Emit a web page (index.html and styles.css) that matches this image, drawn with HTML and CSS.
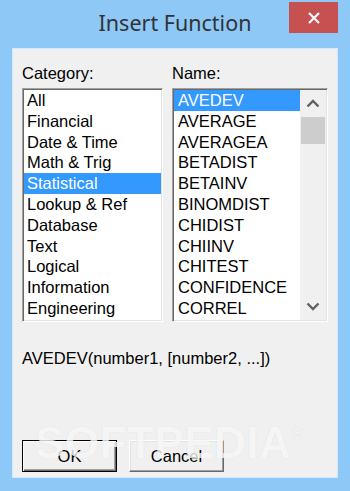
FILE: index.html
```html
<!DOCTYPE html>
<html lang="en">
<head>
  <meta charset="UTF-8" />
  <meta name="viewport" content="width=device-width, initial-scale=1" />
  <title>Insert Function</title>
  <link rel="stylesheet" href="styles.css">
</head>
<body>
  <div class="window">
    <div class="titlebar">
      <span></span>
      <h1 class="title">Insert Function</h1>
      <button class="close" aria-label="Close">
        <svg width="14" height="14" viewBox="0 0 14 14">
          <path d="M2 2 L12 12 M12 2 L2 12" stroke="#fff" stroke-width="2.2" />
        </svg>
      </button>
    </div>

    <div class="client">
      <div class="lists">
        <div class="col col-cat">
          <label class="caption">Category:</label>
          <ul class="listbox">
            <li>All</li>
            <li>Financial</li>
            <li>Date &amp; Time</li>
            <li>Math &amp; Trig</li>
            <li class="selected">Statistical</li>
            <li>Lookup &amp; Ref</li>
            <li>Database</li>
            <li>Text</li>
            <li>Logical</li>
            <li>Information</li>
            <li>Engineering</li>
          </ul>
        </div>

        <div class="col col-name">
          <label class="caption">Name:</label>
          <div class="listbox listbox-scroll">
            <ul class="items">
              <li class="selected">AVEDEV</li>
              <li>AVERAGE</li>
              <li>AVERAGEA</li>
              <li>BETADIST</li>
              <li>BETAINV</li>
              <li>BINOMDIST</li>
              <li>CHIDIST</li>
              <li>CHIINV</li>
              <li>CHITEST</li>
              <li>CONFIDENCE</li>
              <li>CORREL</li>
            </ul>
            <div class="scrollbar">
              <div class="arrow">
                <svg width="14" height="9" viewBox="0 0 14 9">
                  <polyline points="1.5,7.5 7,2 12.5,7.5" fill="none" stroke="#606060" stroke-width="2.4" />
                </svg>
              </div>
              <div class="thumb"></div>
              <div class="track"></div>
              <div class="arrow">
                <svg width="14" height="9" viewBox="0 0 14 9">
                  <polyline points="1.5,1.5 7,7 12.5,1.5" fill="none" stroke="#606060" stroke-width="2.4" />
                </svg>
              </div>
            </div>
          </div>
        </div>
      </div>

      <p class="syntax">AVEDEV(number1, [number2, ...])</p>

      <div class="buttons">
        <button class="btn btn-default">OK</button>
        <button class="btn">Cancel</button>
      </div>

      <div class="watermark" aria-hidden="true">SOFTPEDIA<sup>®</sup></div>
    </div>
  </div>
</body>
</html>
```

FILE: styles.css
```css
body {
  margin: 0;
  background-color: #8dc8f7;
  font-family: 'Liberation Sans', Arial, sans-serif;
  color: #000;
}

.window {
  width: 350px;
  height: 491px;
  box-sizing: border-box;
  padding: 0 12px;
}

/* === Title bar === */
.titlebar {
  height: 48px;
  display: grid;
  grid-template-columns: 1fr auto 1fr;
  align-items: start;
}

.title {
  margin: 0;
  padding-top: 9px;
  font-family: 'Noto Sans', sans-serif;
  font-weight: 400;
  font-size: 21.5px;
  line-height: 28px;
  color: #333;
}

.close {
  justify-self: end;
  margin-top: 2px;
  width: 49px;
  height: 31px;
  padding: 0;
  border: none;
  background-color: #c75050;
  display: flex;
  align-items: center;
  justify-content: center;
}

/* === Dialog body === */
.client {
  position: relative;
  height: 430px;
  box-sizing: border-box;
  background-color: #f0f0f0;
  border: 1px solid #d4e8f9;
  padding: 15px 9px 5px;
  display: flex;
  flex-direction: column;
  overflow: hidden;
}

.lists {
  display: flex;
  gap: 9px;
}

.col-cat {
  width: 141px;
}

.col-name {
  width: 156px;
}

.caption {
  display: block;
  font-size: 16.5px;
  line-height: 19px;
  margin-bottom: 5px;
}

.listbox {
  list-style: none;
  margin: 0;
  height: 234px;
  box-sizing: border-box;
  padding: 1px;
  background-color: #fff;
  border: 1px solid;
  border-color: #a0a0a0 #fff #fff #a0a0a0;
  box-shadow: inset 1px 1px #696969, inset -1px -1px #e3e3e3;
  overflow: hidden;
}

.listbox li,
.items li {
  font-size: 16.5px;
  line-height: 20.8px;
  height: 20.8px;
  padding-left: 3px;
  white-space: nowrap;
}

.listbox-scroll {
  display: flex;
}

.items {
  list-style: none;
  margin: 0;
  padding: 0;
  flex: 1;
}

.items li {
  padding-left: 4px;
}

.selected {
  background-color: #3399ff;
  color: #fff;
}

/* === Scrollbar === */
.scrollbar {
  width: 26px;
  background-color: #f0f0f0;
  display: flex;
  flex-direction: column;
  align-items: center;
}

.arrow {
  height: 27px;
  width: 26px;
  display: flex;
  align-items: center;
  justify-content: center;
}

.thumb {
  width: 24px;
  height: 27px;
  background-color: #cdcdcd;
}

.track {
  flex: 1;
}

/* === Syntax line === */
.syntax {
  margin: 27px 0 0;
  font-size: 16.5px;
  line-height: 19px;
}

/* === Buttons === */
.buttons {
  margin-top: auto;
  display: flex;
  gap: 12px;
}

.btn {
  width: 95px;
  height: 32px;
  box-sizing: border-box;
  padding: 0;
  font-family: 'Liberation Sans', Arial, sans-serif;
  font-size: 16.5px;
  color: #000;
  background-color: #f0f0f0;
  border: 1px solid;
  border-color: #fff #696969 #696969 #fff;
  box-shadow: inset -1px -1px #a0a0a0, inset 1px 1px #e3e3e3;
}

.btn-default {
  border-color: #000;
  box-shadow: inset 1px 1px #fff, inset -1px -1px #696969, inset -2px -2px #a0a0a0;
}

/* === Watermark over the dialog === */
.watermark {
  position: absolute;
  left: 22px;
  top: 362px;
  font-size: 44px;
  line-height: 44px;
  font-weight: 700;
  letter-spacing: 0.5px;
  color: rgba(255, 255, 255, 0.8);
  text-shadow: 0 0 1px rgba(0, 0, 0, 0.12);
  pointer-events: none;
}

.watermark sup {
  font-size: 16px;
  font-weight: 400;
  vertical-align: 20px;
}
```
